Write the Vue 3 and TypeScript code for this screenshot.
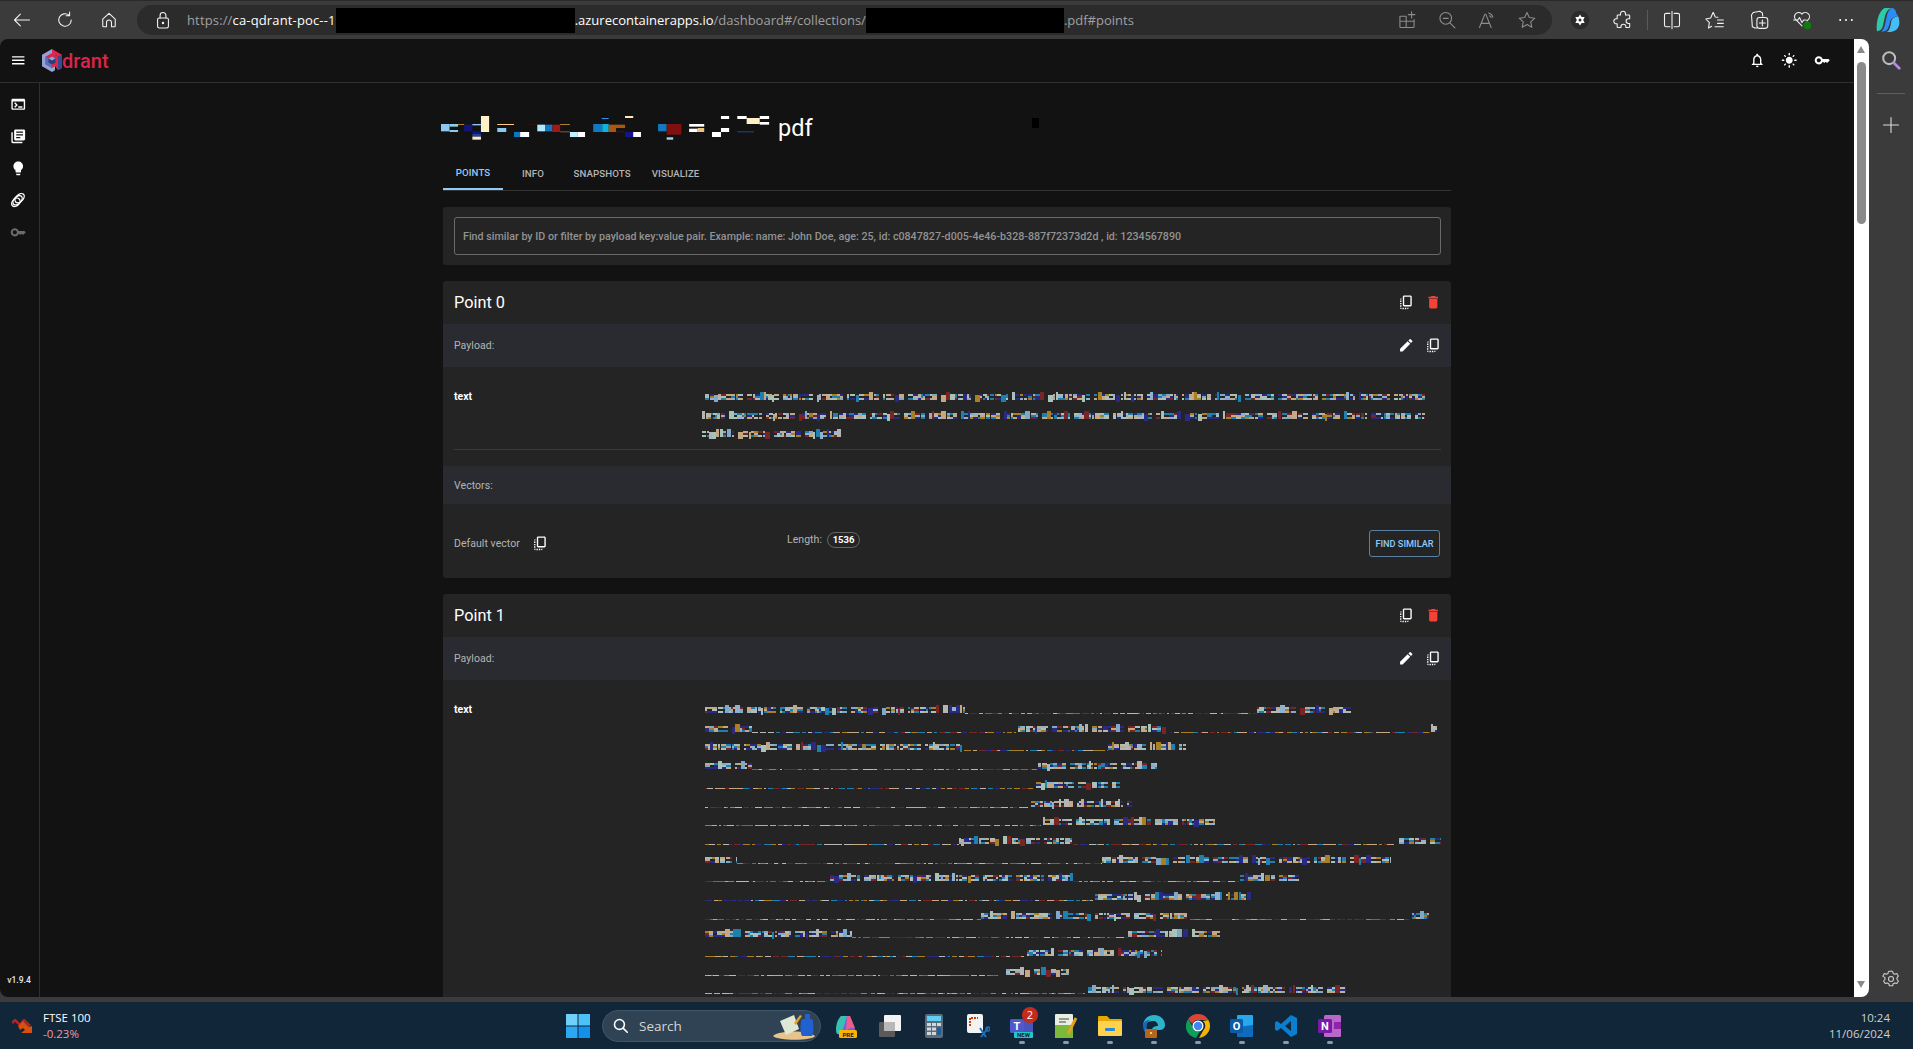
<script setup lang="ts">
interface Box { x: number; y: number; w: number; h: number; c: string }
type Seg = [kind: 'b' | 'd', from: number, to: number]

function rng(seed: number): () => number {
  let a = seed >>> 0
  return () => {
    a = (a + 0x6d2b79f5) >>> 0
    let t = a
    t = Math.imul(t ^ (t >>> 15), t | 1)
    t ^= t + Math.imul(t ^ (t >>> 7), t | 61)
    return ((t ^ (t >>> 14)) >>> 0) / 4294967296
  }
}

const blobColors = ['#a9c2b8', '#c6a783', '#7fa9c7', '#1f80ad', '#7a2525', '#2a2a85', '#a97f25', '#b4b4b4', '#a9c2b8', '#c6a783', '#8fb3cf', '#1f80ad', '#2a2a85']
const dotColors = ['#1f80ad', '#7a2525', '#a97f25', '#b8b8b8', '#2a2a85', '#c6a783']

function buildLine(segs: Seg[], seed: number): Box[] {
  const r = rng(seed)
  const pick = (): string => blobColors[Math.floor(r() * blobColors.length)]
  const out: Box[] = []
  for (const [kind, from, to] of segs) {
    let x = from
    if (kind === 'd') {
      while (x < to) {
        const w = 2 + Math.floor(r() * 6)
        out.push({ x, y: 12, w: Math.min(w, to - x), h: 1, c: dotColors[Math.floor(r() * dotColors.length)] })
        x += w + (r() < 0.35 ? 2 : 0)
      }
    } else {
      let sinceWord = 0
      while (x < to) {
        const w = 2 + Math.floor(r() * 4)
        const p = r()
        const ww = Math.min(w, to - x)
        if (p < 0.12) {
          out.push({ x, y: 4, w: ww, h: 8, c: pick() })
        } else if (p < 0.18) {
          out.push({ x, y: 7, w: ww, h: 7, c: pick() })
        } else if (p < 0.45) {
          out.push({ x, y: 6, w: ww, h: 2, c: pick() })
          out.push({ x, y: 10, w: ww, h: 2, c: pick() })
        } else {
          out.push({ x, y: 6, w: ww, h: 2, c: pick() })
          out.push({ x, y: 8, w: ww, h: 2, c: pick() })
          out.push({ x, y: 10, w: ww, h: 2, c: pick() })
        }
        x += w
        sinceWord += w
        if (sinceWord > 18 + r() * 40) {
          x += 4
          sinceWord = 0
        } else if (r() < 0.22) {
          x += 1
        }
      }
    }
  }
  return out
}

// Each row lists runs of scrambled glyphs ('b') and dot leaders ('d'), in px from the column start.
const point0Rows: Seg[][] = [
  [['b', 3, 723]],
  [['b', 0, 723]],
  [['b', 0, 140]],
]
const u = (v: number): number => Math.round(v / 2.01 - 22)
const point1Raw: [string, number, number][][] = [
  [['b', 50, 572], ['d', 572, 1160], ['b', 1160, 1355]],
  [['b', 50, 145], ['d', 145, 675], ['b', 680, 985], ['d', 985, 1510], ['b', 1510, 1522]],
  [['b', 50, 570], ['d', 570, 860], ['b', 860, 1018]],
  [['b', 50, 145], ['d', 145, 720], ['b', 720, 958]],
  [['d', 50, 710], ['b', 715, 885]],
  [['d', 50, 700], ['b', 705, 908]],
  [['d', 50, 725], ['b', 730, 1075]],
  [['d', 50, 560], ['b', 560, 790], ['d', 790, 1440], ['b', 1445, 1530]],
  [['b', 50, 115], ['d', 115, 848], ['b', 848, 1430]],
  [['d', 50, 300], ['b', 302, 790], ['d', 790, 1125], ['b', 1125, 1245]],
  [['d', 50, 830], ['b', 835, 1152]],
  [['d', 50, 605], ['b', 605, 1025], ['d', 1025, 1470], ['b', 1472, 1505]],
  [['b', 50, 345], ['d', 345, 900], ['b', 900, 1085]],
  [['d', 50, 695], ['b', 698, 968]],
  [['d', 50, 640], ['b', 655, 782]],
  [['d', 50, 815], ['b', 820, 1338]],
]
const point1Rows: Seg[][] = point1Raw.map((row) => row.map(([k, a, b]) => [k as 'b' | 'd', u(a), u(b)] as Seg))

const points = [
  { id: 0, lines: point0Rows.map((s, i) => buildLine(s, 11 + i)), vector: true },
  { id: 1, lines: point1Rows.map((s, i) => buildLine(s, 101 + i)), vector: false },
]

// Scrambled file name, measured from the reference: [x1, y1, x2, y2, colour]
const titleRaw: [number, number, number, number, string][] = [
  [51, 78, 72, 100, '#8cc8f0'], [72, 78, 93, 86, '#8cd0e8'], [72, 96, 93, 102, '#8cc8f0'], [93, 78, 108, 81, '#b08030'],
  [108, 80, 128, 100, '#141478'], [128, 78, 149, 82, '#8cc8f0'], [128, 100, 149, 108, '#141478'], [149, 54, 169, 102, '#fff0c8'],
  [128, 108, 149, 116, '#2040a0'], [128, 116, 149, 125, '#ffe8c8'], [189, 78, 230, 81, '#ffcc88'], [189, 90, 211, 102, '#8cc8f0'],
  [230, 102, 245, 117, '#0a78c0'], [245, 102, 267, 117, '#ffffff'], [287, 80, 306, 100, '#b0e8ff'], [306, 80, 324, 100, '#1478c0'],
  [324, 80, 343, 102, '#a01818'], [343, 78, 367, 81, '#b08030'], [343, 100, 367, 103, '#806030'], [267, 78, 287, 81, '#301010'],
  [367, 102, 385, 117, '#c0f0ff'], [385, 102, 404, 117, '#ffffff'], [445, 60, 462, 63, '#3090f0'], [424, 78, 446, 102, '#1478c0'],
  [446, 78, 462, 102, '#10b0e0'], [462, 80, 502, 90, '#a85810'], [462, 90, 480, 102, '#a85810'], [502, 54, 522, 60, '#ffe8b8'],
  [480, 100, 502, 103, '#501010'], [502, 102, 522, 117, '#141490'], [522, 102, 541, 117, '#ffffff'], [583, 78, 604, 100, '#1478c0'],
  [604, 78, 640, 110, '#801010'], [604, 118, 620, 125, '#b8d0f0'], [659, 78, 696, 86, '#ffffff'], [659, 92, 680, 102, '#ffffff'],
  [680, 90, 696, 102, '#f0c080'], [737, 54, 757, 63, '#ffffff'], [737, 90, 757, 102, '#ffffff'], [715, 102, 737, 117, '#ffffff'],
  [777, 54, 800, 63, '#ffffff'], [800, 60, 832, 78, '#fff0c8'], [832, 54, 855, 63, '#ffffff'], [832, 72, 855, 80, '#ffffff'],
  [777, 100, 818, 103, '#204880'],
]
const titleBoxes: Box[] = titleRaw.map(([a, b, c, d, col]) => ({
  x: (a - 56) / 2.45 + 2,
  y: (b - 54) / 3,
  w: (c - a) / 2.45,
  h: (d - b) / 3,
  c: col,
}))

const taskSlots = ['copilot', 'task', 'calc', 'snip', 'teams', 'note', 'files', 'edge', 'chrome', 'outlook', 'code', 'onenote']
const running = new Set(['teams', 'note', 'files', 'edge', 'chrome', 'outlook', 'code', 'onenote'])
</script>

<template>
  <div class="screen">
    <!-- Browser toolbar -->
    <div class="toolbar">
      <span class="tslot">
        <svg viewBox="0 0 24 24" class="ci"><path d="M21 12H3.500M10 5l-7 7 7 7" /></svg>
      </span>
      <span class="tslot">
        <svg viewBox="0 0 24 24" class="ci"><path d="M19.500 12a7.500 7.500 0 1 1-2.600-5.700M17.500 2.500v4.300h-4.300" /></svg>
      </span>
      <span class="tslot">
        <svg viewBox="0 0 24 24" class="ci"><path d="M4.500 11l7.500-7 7.500 7v8.200a.8.8 0 0 1-.8.8h-3.700v-5a3 3 0 0 0-6 0v5H5.300a.8.8 0 0 1-.8-.8z" /></svg>
      </span>
      <div class="addr">
        <span class="lock">
          <svg viewBox="0 0 24 24" class="ci"><rect x="5.500" y="9.500" width="13" height="12" rx="2" /><path d="M8.500 9.500V6.500a3.500 3.500 0 0 1 7 0v3" /><circle cx="12" cy="15.500" r=".8" fill="#fff" /></svg>
        </span>
        <span class="url">
          <span class="lead"><span class="dim">https://</span>ca-qdrant-poc--1</span><span class="black b1"></span>.azurecontainerapps.io<span class="dim">/dashboard#/collections/</span><span class="black b2"></span><span class="dim">.pdf#points</span>
        </span>
        <span class="addr-tools">
          <span class="aslot"><svg viewBox="0 0 24 24" class="ci gr"><path d="M3.500 7.500h7.500V21H4.500a1 1 0 0 1-1-1zM11 13.500h9.500M11 7.500V21h8.500a1 1 0 0 0 1-1v-8.500M3.500 13.500H11M17.500 2v7.500M13.500 5.500h8" /></svg></span>
          <span class="aslot"><svg viewBox="0 0 24 24" class="ci gr"><circle cx="10.500" cy="10" r="7" /><path d="M15.500 15.500l6 6M7.500 10h6" /></svg></span>
          <span class="aslot"><svg viewBox="0 0 24 24" class="ci gr"><path d="M3 21L9.500 5h1L17 21M5 16h10M14 3.500a7 7 0 0 1 5 5M15 7a3 3 0 0 1 2 2" /></svg></span>
          <span class="aslot"><svg viewBox="0 0 24 24" class="ci gr"><path d="M12 3l2.800 6 6.600.8-4.900 4.500 1.300 6.500L12 17.500 6.200 20.800l1.300-6.500L2.600 9.800l6.600-.8z" /></svg></span>
        </span>
      </div>
      <span class="tslot first">
        <svg viewBox="0 0 24 24" class="ext"><circle cx="12" cy="12" r="11" fill="#2b2b2b" /><path d="M12 5.500l2 3h3.600l-1.800 3.500 1.800 3.500H14l-2 3-2-3H6.400L8.200 12 6.400 8.500H10z" fill="#fff" /><circle cx="12" cy="12" r="1.800" fill="#333" /></svg>
      </span>
      <span class="tslot">
        <svg viewBox="0 0 24 24" class="ci"><path d="M9 4.500a3 3 0 0 1 6 0V6h4a1 1 0 0 1 1 1v3.500h-1.500a2.800 2.800 0 0 0 0 5.600H20V20a1 1 0 0 1-1 1h-3.500v-1a3 3 0 0 0-6 0v1H6a1 1 0 0 1-1-1v-3.500H4a3 3 0 0 1 0-6h1V7a1 1 0 0 1 1-1h3z" /></svg>
      </span>
      <span class="divider"></span>
      <span class="tslot">
        <svg viewBox="0 0 24 24" class="ci"><path d="M12 1.500v21M9.500 4H5a2 2 0 0 0-2 2v12a2 2 0 0 0 2 2h4.500M14.500 4H19a2 2 0 0 1 2 2v12a2 2 0 0 1-2 2h-4.500" /></svg>
      </span>
      <span class="tslot">
        <svg viewBox="0 0 24 24" class="ci"><path d="M10 3l2.300 5.500 3.200.3M8 19.500l-3.800 2 1-6.300L1 10.800l5.800-1.200L9.500 3.200M15 12h7M15 16h7M12 20h10" /></svg>
      </span>
      <span class="tslot">
        <svg viewBox="0 0 24 24" class="ci"><path d="M10 21.500H7L4 20 3 6l2-3 8-1.500 3 2 .5 4" /><rect x="9.500" y="9" width="13" height="13" rx="3" /><path d="M16 12v7M12.500 15.500h7" /></svg>
      </span>
      <span class="tslot">
        <svg viewBox="0 0 24 24" class="ci"><path d="M12 19l-8-8a5 5 0 0 1 8-6 5 5 0 0 1 8 6l-2 2M2 12h5l2-3 3 6 2-3h3" /><circle cx="18.500" cy="18.500" r="4.500" fill="#107c10" stroke="none" /></svg>
      </span>
      <span class="tslot">
        <svg viewBox="0 0 24 24" class="ci"><circle cx="5" cy="12" r="1.200" fill="#fff" stroke="none" /><circle cx="12" cy="12" r="1.200" fill="#fff" stroke="none" /><circle cx="19" cy="12" r="1.200" fill="#fff" stroke="none" /></svg>
      </span>
      <span class="tslot last">
        <svg viewBox="0 0 28 30" class="copi"><path d="M10 1h8c-4 1-7 6-8 12l-2 9c-1 4-3 6-7 6C0 17 3 5 10 1z" fill="#2fc8a8" /><path d="M18 1c4 0 5 3 6 7l2 3c-5 0-9 2-10 8l-2 6c-2 3-5 4-8 3 3-1 4-5 5-10l2-9c1-4 3-7 5-8z" fill="#2a8df5" /><path d="M26 11c3 8 1 17-9 18h-5c3-1 4-4 5-8l1-5c1-3 4-5 8-5z" fill="#45bdf8" /></svg>
      </span>
    </div>

    <div class="middle">
      <!-- Qdrant web UI -->
      <div class="app">
        <header class="app-head">
          <svg viewBox="0 0 24 24" class="mi ham"><path d="M3 18h18v-2H3v2zm0-5h18v-2H3v2zm0-7v2h18V6H3z" /></svg>
          <svg viewBox="0 0 20 23" class="logo">
            <path d="M10 0L0 5.700v11.600L10 23l3-1.700V5.700z" fill="#8fa3d4" />
            <path d="M10 0l10 5.700V19l-4 2.300V7.500L10 4z" fill="#dc244c" />
            <path d="M10 4L3.500 7.700v7.600L10 19l3-1.700V17l3 4.300V7.500z" fill="#dc244c" />
            <path d="M3.500 7.700V15.300L10 19V11.500z" fill="#5a6fb8" />
            <path d="M6.500 9.500L10 7.500l3.500 2v4L10 15.500l-3.500-2z" fill="#2a3f78" />
            <path d="M10 7.500l3.500 2L10 11.500l-3.500-2z" fill="#8fa3d4" />
            <path d="M16 7.500V21.300l4-2.300V5.700z" fill="#3a4a86" />
          </svg>
          <span class="brand">drant</span>
          <span class="head-tools">
            <svg viewBox="0 0 24 24" class="mi"><path d="M12 22c1.100 0 2-.9 2-2h-4c0 1.100.89 2 2 2zm6-6v-5c0-3.070-1.640-5.640-4.500-6.320V4c0-.83-.67-1.500-1.500-1.500s-1.500.67-1.500 1.500v.68C7.630 5.360 6 7.920 6 11v5l-2 2v1h16v-1l-2-2zm-2 1H8v-6c0-2.480 1.510-4.500 4-4.500s4 2.020 4 4.500v6z" /></svg>
            <svg viewBox="0 0 24 24" class="mi"><path d="M12 7c-2.760 0-5 2.240-5 5s2.240 5 5 5 5-2.240 5-5-2.240-5-5-5zM2 13h2c.55 0 1-.45 1-1s-.45-1-1-1H2c-.55 0-1 .45-1 1s.45 1 1 1zm18 0h2c.55 0 1-.45 1-1s-.45-1-1-1h-2c-.55 0-1 .45-1 1s.45 1 1 1zM11 2v2c0 .55.45 1 1 1s1-.45 1-1V2c0-.55-.45-1-1-1s-1 .45-1 1zm0 18v2c0 .55.45 1 1 1s1-.45 1-1v-2c0-.55-.45-1-1-1s-1 .45-1 1zM5.990 4.580c-.39-.39-1.030-.39-1.410 0-.39.39-.39 1.030 0 1.410l1.060 1.060c.39.39 1.030.39 1.410 0s.39-1.030 0-1.410L5.990 4.580zm12.370 12.370c-.39-.39-1.030-.39-1.410 0-.39.39-.39 1.030 0 1.410l1.060 1.060c.39.39 1.030.39 1.410 0 .39-.39.39-1.030 0-1.410l-1.060-1.060zm1.060-10.960c.39-.39.39-1.030 0-1.410-.39-.39-1.030-.39-1.410 0l-1.060 1.060c-.39.39-.39 1.030 0 1.410s1.030.39 1.410 0l1.060-1.060zM7.050 18.360c.39-.39.39-1.030 0-1.410-.39-.39-1.030-.39-1.410 0l-1.060 1.060c-.39.39-.39 1.030 0 1.410s1.030.39 1.410 0l1.060-1.060z" /></svg>
            <svg viewBox="0 0 24 24" class="mi"><path d="M21 10h-8.350C11.830 7.670 9.610 6 7 6c-3.310 0-6 2.690-6 6s2.690 6 6 6c2.610 0 4.830-1.670 5.650-4H13l2 2 2-2 2 2 4-4.040L21 10zM7 15c-1.650 0-3-1.350-3-3s1.350-3 3-3 3 1.350 3 3-1.350 3-3 3z" /></svg>
          </span>
        </header>
        <div class="app-body">
          <nav class="side">
            <div class="nav-icons">
              <svg viewBox="0 0 24 24" class="mi"><path d="M20 4H4c-1.110 0-2 .9-2 2v12c0 1.100.89 2 2 2h16c1.100 0 2-.9 2-2V6c0-1.100-.89-2-2-2zm0 14H4V8h16v10zm-2-1h-6v-2h6v2zM7.500 17l-1.410-1.410L8.670 13l-2.590-2.590L7.500 9l4 4-4 4z" /></svg>
              <svg viewBox="0 0 24 24" class="mi"><path d="M4 6H2v14c0 1.100.9 2 2 2h14v-2H4V6zm16-4H8c-1.100 0-2 .9-2 2v12c0 1.100.9 2 2 2h12c1.100 0 2-.9 2-2V4c0-1.100-.9-2-2-2zm-1 9H9V9h10v2zm-4 4H9v-2h6v2zm4-8H9V5h10v2z" /></svg>
              <svg viewBox="0 0 24 24" class="mi"><path d="M9 21c0 .5.4 1 1 1h4c.6 0 1-.5 1-1v-1H9v1zm3-19C8.100 2 5 5.100 5 9c0 2.400 1.200 4.500 3 5.700V17c0 .5.4 1 1 1h6c.6 0 1-.5 1-1v-2.300c1.800-1.300 3-3.400 3-5.700 0-3.900-3.100-7-7-7z" /></svg>
              <svg viewBox="0 0 24 24" class="mi rings"><ellipse cx="14" cy="9" rx="8" ry="5" transform="rotate(-45 14 9)" /><ellipse cx="11" cy="12" rx="8" ry="5" transform="rotate(-45 11 12)" /><ellipse cx="8.500" cy="15" rx="7" ry="5" transform="rotate(-45 8.500 15)" /></svg>
              <svg viewBox="0 0 24 24" class="mi faded"><path d="M21 10h-8.350C11.830 7.670 9.610 6 7 6c-3.310 0-6 2.690-6 6s2.690 6 6 6c2.610 0 4.830-1.670 5.650-4H13l2 2 2-2 2 2 4-4.040L21 10zM7 15c-1.650 0-3-1.350-3-3s1.350-3 3-3 3 1.350 3 3-1.350 3-3 3z" /></svg>
            </div>
            <span class="version">v1.9.4</span>
          </nav>
          <main class="main">
            <div class="content">
              <div class="title-row">
                <svg class="title-pix" width="330" height="24">
                  <rect v-for="(b, i) in titleBoxes" :key="i" :x="b.x" :y="b.y" :width="b.w" :height="b.h" :fill="b.c" />
                </svg>
                <h1 class="title">pdf</h1>
                <span class="speck"></span>
              </div>
              <div class="tabs">
                <span class="tab active">Points</span>
                <span class="tab">Info</span>
                <span class="tab">Snapshots</span>
                <span class="tab">Visualize</span>
              </div>
              <section class="card search-card">
                <div class="search-box">Find similar by ID or filter by payload key:value pair. Example: name: John Doe, age: 25, id: c0847827-d005-4e46-b328-887f72373d2d , id: 1234567890</div>
              </section>
              <section v-for="p in points" :key="p.id" class="card point">
                <div class="row head">
                  <span class="point-title">Point {{ p.id }}</span>
                  <span class="acts">
                    <svg viewBox="0 0 24 24" class="mi act"><path d="M18 2H9c-1.100 0-2 .9-2 2v12c0 1.100.9 2 2 2h9c1.100 0 2-.9 2-2V4c0-1.100-.9-2-2-2zm0 14H9V4h9v12zM3 15v-2h2v2H3zm0-5.500h2v2H3v-2zM10 20h2v2h-2v-2zm-7-1.500v-2h2v2H3zM5 22c-1.100 0-2-.9-2-2h2v2zm3.500 0h-2v-2h2v2zm5 0v-2h2c0 1.100-.9 2-2 2zM5 6v2H3c0-1.100.9-2 2-2z" /></svg>
                    <svg viewBox="0 0 24 24" class="mi act red"><path d="M6 19c0 1.100.9 2 2 2h8c1.100 0 2-.9 2-2V7H6v12zM19 4h-3.500l-1-1h-5l-1 1H5v2h14V4z" /></svg>
                  </span>
                </div>
                <div class="row band">
                  <span class="label">Payload:</span>
                  <span class="acts">
                    <svg viewBox="0 0 24 24" class="mi act"><path d="M3 17.250V21h3.750L17.810 9.940l-3.750-3.750L3 17.250zM20.710 7.040c.39-.39.39-1.020 0-1.410l-2.340-2.340a.9959.9959 0 0 0-1.410 0l-1.830 1.830 3.750 3.750 1.830-1.830z" /></svg>
                    <svg viewBox="0 0 24 24" class="mi act"><path d="M18 2H9c-1.100 0-2 .9-2 2v12c0 1.100.9 2 2 2h9c1.100 0 2-.9 2-2V4c0-1.100-.9-2-2-2zm0 14H9V4h9v12zM3 15v-2h2v2H3zm0-5.500h2v2H3v-2zM10 20h2v2h-2v-2zm-7-1.500v-2h2v2H3zM5 22c-1.100 0-2-.9-2-2h2v2zm3.500 0h-2v-2h2v2zm5 0v-2h2c0 1.100-.9 2-2 2zM5 6v2H3c0-1.100.9-2 2-2z" /></svg>
                  </span>
                </div>
                <div class="kv">
                  <span class="key">text</span>
                  <div class="val">
                    <svg v-for="(line, li) in p.lines" :key="li" class="pix" width="739" height="18.700" shape-rendering="crispEdges">
                      <rect v-for="(b, i) in line" :key="i" :x="b.x" :y="b.y" :width="b.w" :height="b.h" :fill="b.c" />
                    </svg>
                  </div>
                </div>
                <template v-if="p.vector">
                  <div class="rule"></div>
                  <div class="row band vec-band"><span class="label">Vectors:</span></div>
                  <div class="vec">
                    <div class="vec-name">
                      <span class="label">Default vector</span>
                      <svg viewBox="0 0 24 24" class="mi act"><path d="M18 2H9c-1.100 0-2 .9-2 2v12c0 1.100.9 2 2 2h9c1.100 0 2-.9 2-2V4c0-1.100-.9-2-2-2zm0 14H9V4h9v12zM3 15v-2h2v2H3zm0-5.500h2v2H3v-2zM10 20h2v2h-2v-2zm-7-1.500v-2h2v2H3zM5 22c-1.100 0-2-.9-2-2h2v2zm3.500 0h-2v-2h2v2zm5 0v-2h2c0 1.100-.9 2-2 2zM5 6v2H3c0-1.100.9-2 2-2z" /></svg>
                    </div>
                    <div class="vec-len">
                      <span class="label">Length:</span>
                      <span class="chip">1536</span>
                    </div>
                    <span class="btn">Find similar</span>
                  </div>
                </template>
              </section>
            </div>
          </main>
        </div>
      </div>

      <!-- Page scrollbar -->
      <div class="scrollbar">
        <span class="arrow up"></span>
        <span class="thumb"></span>
        <span class="arrow down"></span>
      </div>

      <!-- Edge sidebar -->
      <aside class="rail">
        <svg viewBox="0 0 24 24" class="rail-search"><circle cx="10" cy="10" r="6.500" fill="none" stroke="#bdbdbd" stroke-width="2.200" /><path d="M15 15l6 6" stroke="#b58ae0" stroke-width="3" stroke-linecap="round" /></svg>
        <span class="rail-sep"></span>
        <svg viewBox="0 0 24 24" class="ci rail-plus"><path d="M12 3v18M3 12h18" /></svg>
        <svg viewBox="0 0 24 24" class="ci rail-gear"><path d="M12 2.500l2 .4.600 2.400 2 1 2.400-.8 1.900 3.100-1.700 1.800v2.200l1.700 1.800-1.900 3.100-2.400-.8-2 1-.6 2.400h-4l-.6-2.400-2-1-2.400.8-1.900-3.100 1.700-1.800v-2.200L2.100 8.600 4 5.500l2.400.8 2-1L9 2.900z" /><circle cx="12" cy="12" r="3" /></svg>
      </aside>
    </div>

    <!-- Windows taskbar -->
    <footer class="taskbar">
      <div class="widget">
        <svg viewBox="0 0 24 14" class="trend">
          <path d="M0 4l3-3 5 5 4-5 6 6" fill="none" stroke="#b3261e" stroke-width="2.500" />
          <path d="M6 7l5-5 6 6 3-1v7H9l4-3-2-2-3 2z" fill="#d84f0e" />
        </svg>
        <div class="ticker">
          <span class="tick-name">FTSE 100</span>
          <span class="tick-val">-0.23%</span>
        </div>
      </div>
      <svg viewBox="0 0 24 24" class="start">
        <rect x="0" y="0" width="11.500" height="11.500" fill="#6fd0fa" />
        <rect x="12.500" y="0" width="11.500" height="11.500" fill="#4cc0f8" />
        <rect x="0" y="12.500" width="11.500" height="11.500" fill="#2aa8f2" />
        <rect x="12.500" y="12.500" width="11.500" height="11.500" fill="#1290ea" />
      </svg>
      <div class="pill">
        <svg viewBox="0 0 24 24" class="pill-ico"><circle cx="10.500" cy="10.500" r="7" fill="none" stroke="#fff" stroke-width="2.200" /><path d="M16 16l5.500 5.500" stroke="#fff" stroke-width="2.200" stroke-linecap="round" /></svg>
        <span class="pill-text">Search</span>
        <svg viewBox="0 0 44 30" class="pill-art">
          <path d="M1 25c5-6 36-6 42 0-3 5-37 5-42 0z" fill="#e6c48c" />
          <path d="M8 10l14-6 5 14-13 6z" fill="#dfe8d4" />
          <path d="M22 12l6-8 2 1-6 9z" fill="#e0a030" />
          <path d="M30 8h3V3h5v5h2c2 2 2 14 0 17h-10c-2-3-2-14 0-17z" fill="#2060d0" />
        </svg>
      </div>
      <div class="apps">
        <span v-for="s in taskSlots" :key="s" class="app-slot">
          <svg v-if="s === 'copilot'" viewBox="0 0 24 24" class="tico">
            <path d="M7 2h9l5 13c1 4-1 6-4 6H8C3 21 1 18 3 12z" fill="#7b5de8" />
            <path d="M7 2h6L9 15c-1 3-3 5-6 5C1 16 2 7 7 2z" fill="#36c2b0" />
            <path d="M13 2h3l5 12c-5-1-8 1-9 4z" fill="#f25c8a" />
            <rect x="5" y="16" width="18" height="8" rx="1.500" fill="#f7b500" />
            <text x="14" y="22.500" class="badge-txt dark">PRE</text>
          </svg>
          <svg v-else-if="s === 'task'" viewBox="0 0 24 24" class="tico">
            <rect x="1" y="8" width="16" height="15" rx="1" fill="#5a5a5a" />
            <rect x="6" y="1" width="17" height="16" rx="1" fill="#f3f3f3" />
            <rect x="6" y="8" width="11" height="9" fill="#b8b8b8" />
          </svg>
          <svg v-else-if="s === 'calc'" viewBox="0 0 24 24" class="tico">
            <rect x="3" y="0" width="18" height="24" rx="2" fill="#5b6b78" />
            <rect x="5" y="2" width="14" height="5" fill="#5ed0f5" />
            <g fill="#cfd8dc"><rect x="5" y="9" width="4" height="3" /><rect x="10" y="9" width="4" height="3" /><rect x="15" y="9" width="4" height="3" /><rect x="5" y="13.500" width="4" height="3" /><rect x="10" y="13.500" width="4" height="3" /><rect x="5" y="18" width="4" height="3" /><rect x="10" y="18" width="4" height="3" /></g>
            <rect x="15" y="13.500" width="4" height="7.500" fill="#1d5f9a" />
          </svg>
          <svg v-else-if="s === 'snip'" viewBox="0 0 24 24" class="tico">
            <rect x="1" y="0" width="16" height="19" rx="2" fill="#f3f3f3" />
            <path d="M4 12V4h8" fill="none" stroke="#d83b01" stroke-width="2" stroke-dasharray="2 1" />
            <path d="M14 14l6 9M22 14l-7 9" stroke="#1d6fb8" stroke-width="2" />
            <circle cx="22" cy="15" r="2" fill="none" stroke="#1d6fb8" stroke-width="1.500" />
          </svg>
          <svg v-else-if="s === 'teams'" viewBox="0 0 24 24" class="tico">
            <rect x="6" y="7" width="17" height="13" rx="2" fill="#4b53bc" />
            <rect x="0" y="5" width="14" height="14" rx="1.500" fill="#5059c9" />
            <text x="7" y="16" class="t-letter">T</text>
            <rect x="4" y="18" width="19" height="6" rx="1" fill="#20c9c9" />
            <text x="13.500" y="23" class="badge-txt dark">NEW</text>
          </svg>
          <svg v-else-if="s === 'note'" viewBox="0 0 24 24" class="tico">
            <rect x="1" y="0" width="18" height="24" rx="1" fill="#e8efe0" />
            <rect x="1" y="11" width="18" height="13" fill="#7cb83a" />
            <path d="M5 8h7M5 5h10" stroke="#444" stroke-width="1" />
            <path d="M14 20l8-16" stroke="#e5a020" stroke-width="3" />
          </svg>
          <svg v-else-if="s === 'files'" viewBox="0 0 24 24" class="tico">
            <path d="M0 3a1 1 0 0 1 1-1h8l3 3h11a1 1 0 0 1 1 1v4H0z" fill="#e6a700" />
            <rect x="0" y="7" width="24" height="15" rx="1" fill="#ffd24d" />
            <rect x="7" y="14" width="10" height="3" rx="1" fill="#2b88d8" />
          </svg>
          <svg v-else-if="s === 'edge'" viewBox="0 0 24 24" class="tico">
            <path d="M1 11C2 4 7 1 12 1c6 0 11 4 11 10 0 4-3 5-6 5H10c0-3 3-4 6-4 0-3-2-5-5-5-5 0-8 3-10 4z" fill="#2fb5c9" />
            <path d="M1 11c0-3 4-5 7-5-3 2-4 6-3 10 .8 3 3 6 7 7C5 23 1 18 1 11z" fill="#1668b5" />
            <rect x="3" y="15" width="12" height="9" rx="1" fill="#b5651d" />
            <rect x="8" y="18" width="2" height="2" fill="#ffd24d" />
          </svg>
          <svg v-else-if="s === 'chrome'" viewBox="0 0 24 24" class="tico">
            <path d="M12 0a12 12 0 0 1 10.400 6H12a6 6 0 0 0-5.700 4L2.200 5A12 12 0 0 1 12 0z" fill="#db4437" />
            <path d="M22.400 6A12 12 0 0 1 13 24l4.500-8A6 6 0 0 0 17 7z" fill="#f4b400" />
            <path d="M2.200 5l5 8.500A6 6 0 0 0 13.500 18L10 24A12 12 0 0 1 2.200 5z" fill="#0f9d58" />
            <circle cx="12" cy="12" r="5.500" fill="#fff" />
            <circle cx="12" cy="12" r="4.200" fill="#4285f4" />
          </svg>
          <svg v-else-if="s === 'outlook'" viewBox="0 0 24 24" class="tico">
            <rect x="7" y="1" width="16" height="20" rx="1" fill="#28a8ea" />
            <path d="M7 13l16-2v11a1 1 0 0 1-1 1H8a1 1 0 0 1-1-1z" fill="#0f6cbd" />
            <rect x="0" y="5" width="13" height="14" rx="1.500" fill="#0a5ca8" />
            <text x="6.500" y="16" class="t-letter">O</text>
          </svg>
          <svg v-else-if="s === 'code'" viewBox="0 0 24 24" class="tico">
            <path d="M17 1l6 3v16l-6 3-10-9-4 3-2-1.500v-7L3 7l4 3zM17 7l-6 5 6 5z" fill="#0a7fd0" fill-rule="evenodd" />
          </svg>
          <svg v-else viewBox="0 0 24 24" class="tico">
            <rect x="6" y="1" width="17" height="22" rx="1.500" fill="#ba68c8" />
            <rect x="16" y="8" width="7" height="7" fill="#8e24aa" />
            <rect x="0" y="5" width="14" height="14" rx="1.500" fill="#7719aa" />
            <text x="7" y="16" class="t-letter">N</text>
          </svg>
          <span v-if="s === 'teams'" class="count">2</span>
          <span v-if="running.has(s)" class="run"></span>
        </span>
      </div>
      <div class="clock">
        <span>10:24</span>
        <span>11/06/2024</span>
      </div>
    </footer>
  </div>
</template>

<style>
html, body { margin: 0; background: #3b3b3b; overflow: hidden; }
</style>

<style scoped>
.screen {
  width: 1913px;
  height: 1049px;
  display: flex;
  flex-direction: column;
  background: #3b3b3b;
  overflow: hidden;
  font-family: Roboto, "Liberation Sans", sans-serif;
  color: #fff;
}
.toolbar {
  flex: 0 0 39px;
  display: flex;
  align-items: center;
  border-top: 1px solid #2a2a2a;
  box-sizing: border-box;
}
.tslot { width: 43.500px; height: 30px; display: flex; align-items: center; justify-content: center; flex: none; }
.tslot.first { margin-left: 6px; }
.tslot.last { width: 40px; }
.ci { width: 20px; height: 20px; fill: none; stroke: #f2f2f2; stroke-width: 1.300; stroke-linejoin: round; stroke-linecap: round; }
.ci.gr { stroke: #8d8d8d; }
.ext { width: 20px; height: 20px; }
.copi { width: 24px; height: 26px; }
.divider { width: 1px; height: 20px; background: #5a5a5a; margin: 0 2px 0 2px; }
.addr {
  margin-left: 6.500px;
  width: 1415px;
  height: 30px;
  border-radius: 15px;
  background: #2b2b2b;
  display: flex;
  align-items: center;
  flex: none;
  padding-left: 16px;
  box-sizing: border-box;
}
.lock { width: 20px; height: 20px; flex: none; }
.url {
  margin-left: 14px;
  font-family: "Open Sans", "Liberation Sans", sans-serif;
  font-size: 13px;
  color: #fff;
  display: flex;
  align-items: center;
  white-space: pre;
}
.lead { letter-spacing: 0.150px; }
.dim { color: #a0a0a0; }
.black { display: inline-block; background: #000; height: 25px; }
.b1 { width: 239px; }
.b2 { width: 198px; }
.addr-tools { margin-left: auto; margin-right: 5px; display: flex; }
.aslot { width: 40px; display: flex; justify-content: center; }

.middle { flex: 0 0 958px; display: flex; }
.app {
  width: 1854px;
  height: 958px;
  background: #121212;
  border-radius: 8px 0 0 8px;
  display: flex;
  flex-direction: column;
  overflow: hidden;
}
.app-head {
  flex: 0 0 44px;
  box-sizing: border-box;
  border-bottom: 1px solid #2f2f2f;
  display: flex;
  align-items: center;
  padding-left: 10px;
}
.mi { width: 16.500px; height: 16.500px; fill: #fff; display: block; flex: none; }
.ham { margin-right: 15.500px; }
.logo { width: 20px; height: 23px; flex: none; }
.brand { margin-left: 0; color: #dc244c; font-size: 20px; font-weight: 500; letter-spacing: 0; }
.head-tools { margin-left: auto; margin-right: 24px; display: flex; gap: 16px; }
.app-body { flex: 1; min-height: 0; display: flex; }
.side {
  width: 40px;
  box-sizing: border-box;
  border-right: 1px solid #2f2f2f;
  display: flex;
  flex-direction: column;
  align-items: center;
  padding: 13px 3px 12px 0;
}
.nav-icons { display: flex; flex-direction: column; gap: 15.500px; }
.rings { fill: none; stroke: #fff; stroke-width: 2; }
.faded { fill: #6b6b6b; }
.version { margin-top: auto; margin-left: 2px; font-size: 8.500px; font-weight: 500; color: #e8e8e8; }
.main { flex: 1; min-width: 0; overflow: hidden; display: flex; justify-content: center; }
.content { width: 1008px; flex: none; padding-top: 30px; }
.title-row { display: flex; align-items: center; height: 30px; position: relative; margin-left: -2px; }
.title-pix { flex: none; }
.title { margin: 0 0 0 7px; font-size: 23.500px; font-weight: 400; line-height: 30px; color: #fff; }
.speck { position: absolute; left: 591px; top: 5px; width: 7px; height: 10px; background: #000; }
.tabs { margin-top: 12px; height: 36px; box-sizing: border-box; border-bottom: 1px solid #343434; display: flex; }
.tab {
  min-width: 60px;
  box-sizing: border-box;
  padding: 2px 10.500px 0;
  height: 35px;
  display: flex;
  align-items: center;
  justify-content: center;
  font-size: 9.700px;
  font-weight: 500;
  text-transform: uppercase;
  color: #b4b4b4;
  letter-spacing: 0.100px;
}
.tab.active { color: #90caf9; border-bottom: 2px solid #90caf9; }
.card { background: #242424; border-radius: 3px; margin-top: 16px; overflow: hidden; }
.search-card { padding: 10px 10px 10px 11px; }
.search-box {
  height: 38px;
  box-sizing: border-box;
  border: 1px solid #6a6a6a;
  border-radius: 3px;
  padding-left: 8px;
  display: flex;
  align-items: center;
  font-size: 10.700px;
  font-weight: 500;
  color: #929292;
  white-space: nowrap;
}
.row { display: flex; align-items: center; padding: 0 10px 0 11px; height: 43px; }
.band { background: #2a2b30; }
.point-title { font-size: 16.300px; font-weight: 400; color: #fff; }
.label { font-size: 10.500px; color: #b5b5b5; font-weight: 400; letter-spacing: 0.050px; }
.acts { margin-left: auto; display: flex; gap: 10.500px; }
.act { width: 16.500px; height: 16.500px; }
.red { fill: #f44336; }
.kv { display: flex; padding: 21px 0 5px 11px; }
.key { width: 248px; flex: none; font-size: 10.500px; font-weight: 700; color: #fff; line-height: 18px; }
.val { display: flex; flex-direction: column; }
.pix { display: block; flex: none; }
.rule { height: 1px; background: #3b3b3b; margin: 0 10px 16px 11px; }
.vec-band { height: 38px; }
.vec { height: 74px; display: flex; align-items: center; padding: 0 11px; }
.vec-name { width: 333px; display: flex; align-items: center; gap: 10px; flex: none; margin-top: 4px; }
.vec-name .label { width: 68px; }
.vec-len { display: flex; align-items: center; gap: 5px; margin-top: -3px; }
.chip {
  height: 16px;
  box-sizing: border-box;
  width: 33px;
  border: 1px solid #666;
  border-radius: 8px;
  display: flex;
  align-items: center;
  justify-content: center;
  font-size: 9.500px;
  font-weight: 700;
  color: #fff;
}
.btn {
  margin-left: auto;
  width: 71px;
  height: 27px;
  box-sizing: border-box;
  border: 1px solid #5b7f9e;
  border-radius: 3px;
  display: flex;
  align-items: center;
  justify-content: center;
  font-size: 9.200px;
  font-weight: 500;
  text-transform: uppercase;
  color: #90caf9;
  margin-top: 5px;
}

.scrollbar {
  width: 15px;
  height: 958px;
  background: #fff;
  border-radius: 0 8px 8px 0;
  position: relative;
  flex: none;
}
.thumb { position: absolute; left: 3px; top: 23px; width: 9px; height: 162px; border-radius: 5px; background: #8a8a8a; }
.arrow { position: absolute; left: 3px; width: 0; height: 0; border-left: 4.500px solid transparent; border-right: 4.500px solid transparent; }
.arrow.up { top: 7px; border-bottom: 7px solid #8a8a8a; }
.arrow.down { bottom: 9px; border-top: 7px solid #8a8a8a; }

.rail { flex: 1; display: flex; flex-direction: column; align-items: center; padding-top: 10px; }
.rail-search { width: 22px; height: 22px; }
.rail-sep { width: 28px; height: 1px; background: #5f5f5f; margin-top: 22px; }
.rail-plus { margin-top: 21px; stroke: #dcdcdc; }
.rail-gear { margin-top: auto; margin-bottom: 8px; stroke: #cfcfcf; }

.taskbar {
  margin-top: 5px;
  flex: 0 0 47px;
  background: #12263a;
  display: flex;
  align-items: center;
  font-family: "Open Sans", "Liberation Sans", sans-serif;
}
.widget { width: 566px; flex: none; box-sizing: border-box; padding-left: 12px; display: flex; align-items: center; gap: 7px; }
.trend { width: 24px; height: 14px; flex: none; }
.ticker { display: flex; flex-direction: column; font-size: 11.500px; line-height: 16px; }
.tick-name { color: #fff; }
.tick-val { color: #ee9aa2; }
.start { width: 24px; height: 24px; flex: none; }
.pill {
  margin-left: 12px;
  width: 219px;
  height: 32px;
  box-sizing: border-box;
  background: #2f4354;
  border: 1px solid #42566a;
  border-radius: 16px;
  display: flex;
  align-items: center;
  padding-left: 9px;
  flex: none;
}
.pill-ico { width: 17px; height: 17px; flex: none; }
.pill-text { margin-left: 10px; font-size: 13.500px; color: #d6d6d6; }
.pill-art { margin-left: auto; margin-right: 4px; width: 44px; height: 30px; }
.apps { display: flex; margin-left: 3px; }
.app-slot { width: 44px; height: 47px; position: relative; display: flex; align-items: center; justify-content: center; }
.tico { width: 24px; height: 24px; }
.badge-txt { font-family: Roboto, sans-serif; font-size: 6px; font-weight: 700; text-anchor: middle; }
.dark { fill: #14222e; }
.t-letter { font-family: Roboto, sans-serif; font-size: 11px; font-weight: 700; fill: #fff; text-anchor: middle; }
.count {
  position: absolute;
  left: 22px;
  top: 5px;
  width: 16px;
  height: 16px;
  border-radius: 50%;
  background: #c42b1c;
  color: #fff;
  font-size: 11px;
  text-align: center;
  line-height: 16px;
}
.run { position: absolute; bottom: 5px; left: 19px; width: 6px; height: 3px; border-radius: 2px; background: #8f9aa3; }
.clock {
  margin-left: auto;
  margin-right: 23px;
  display: flex;
  flex-direction: column;
  align-items: flex-end;
  font-size: 11.500px;
  line-height: 16px;
  color: #d0d0d0;
}
</style>
